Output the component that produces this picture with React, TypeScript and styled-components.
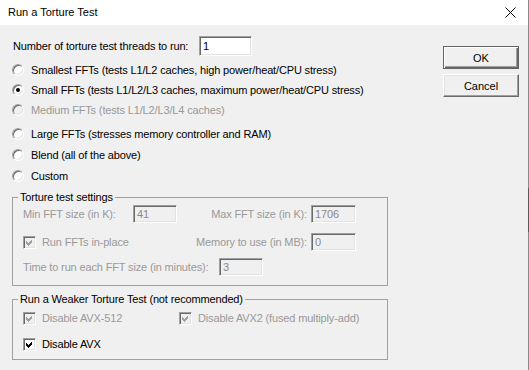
import styled, { createGlobalStyle, css } from 'styled-components';

const GlobalStyle = createGlobalStyle`
  html, body {
    margin: 0;
    padding: 0;
    background: #f0f0f0;
  }
  body {
    font-family: "Liberation Sans", Arial, sans-serif;
    font-size: 11px;
    letter-spacing: -0.15px;
    color: #000;
  }
  * {
    box-sizing: border-box;
  }
`;

const Window = styled.div`
  position: relative;
  width: 529px;
  height: 370px;
  background: #f0f0f0;
  display: flex;
  flex-direction: column;
  overflow: hidden;
  &::after {
    content: '';
    position: absolute;
    top: 0;
    right: 0;
    width: 1px;
    height: 100%;
    background: linear-gradient(
      to bottom,
      #8c8c8c 0 188px,
      #5a5a5a 188px 232px,
      #8c8c8c 232px
    );
  }
`;

const TitleBar = styled.div`
  height: 25px;
  flex: none;
  background: #fff;
  display: flex;
  align-items: center;
  justify-content: space-between;
  padding: 0 13px 0 8px;
`;

const Title = styled.span`
  font-size: 11px;
  line-height: 13px;
  letter-spacing: 0;
`;

const Body = styled.div`
  flex: 1;
  display: flex;
  padding: 11px 0 0 12px;
`;

const Main = styled.div`
  width: 376px;
  display: flex;
  flex-direction: column;
`;

const Side = styled.div`
  margin-left: 55px;
  padding-top: 10px;
  display: flex;
  flex-direction: column;
  gap: 5px;
`;

const Button = styled.button<{ $default?: boolean }>`
  width: 76px;
  height: 23px;
  padding: 0;
  font: inherit;
  letter-spacing: 0;
  color: #000;
  background: #f0f0f0;
  border: 1px solid;
  border-color: #fff #696969 #696969 #fff;
  box-shadow: inset -1px -1px 0 #a0a0a0, inset 1px 1px 0 #e3e3e3;
  ${(p) =>
    p.$default &&
    css`
      border-color: #646464;
      box-shadow: inset 1px 1px 0 #fff, inset -1px -1px 0 #696969,
        inset -2px -2px 0 #a0a0a0;
    `}
`;

const Row = styled.div<{ $h?: number; $mt?: number; $pl?: number }>`
  display: flex;
  align-items: center;
  height: ${(p) => p.$h ?? 20}px;
  margin-top: ${(p) => p.$mt ?? 0}px;
  padding-left: ${(p) => p.$pl ?? 0}px;
  white-space: nowrap;
`;

const Label = styled.span<{ $w?: number; $disabled?: boolean; $right?: boolean }>`
  ${(p) => p.$w && `width: ${p.$w}px; flex: none;`}
  color: ${(p) => (p.$disabled ? '#999' : '#000')};
  text-align: ${(p) => (p.$right ? 'right' : 'left')};
  padding-right: ${(p) => (p.$right ? 4 : 0)}px;
`;

const Field = styled.div<{ $w: number; $h?: number; $disabled?: boolean }>`
  width: ${(p) => p.$w}px;
  height: ${(p) => p.$h ?? 18}px;
  flex: none;
  display: flex;
  align-items: center;
  padding-left: 3px;
  border: 1px solid;
  border-color: #a0a0a0 #fff #fff #a0a0a0;
  box-shadow: inset 1px 1px 0 #696969, inset -1px -1px 0 #e3e3e3;
  background: ${(p) => (p.$disabled ? '#f0f0f0' : '#fff')};
  color: ${(p) => (p.$disabled ? '#8a8a8a' : '#000')};
`;

const RadioDot = styled.span<{ $checked?: boolean; $disabled?: boolean }>`
  position: relative;
  width: 12px;
  height: 12px;
  flex: none;
  margin-right: 7px;
  border-radius: 50%;
  border: 1px solid;
  border-color: #a0a0a0 #fff #fff #a0a0a0;
  box-shadow: inset 1px 1px 0 #696969, inset -1px -1px 0 #e3e3e3;
  background: ${(p) => (p.$disabled ? '#f0f0f0' : '#fff')};
  ${(p) =>
    p.$checked &&
    css`
      &::after {
        content: '';
        position: absolute;
        left: 3px;
        top: 3px;
        width: 4px;
        height: 4px;
        border-radius: 50%;
        background: #000;
      }
    `}
`;

const CheckBox = styled.span<{ $disabled?: boolean }>`
  width: 13px;
  height: 13px;
  flex: none;
  margin-right: 6px;
  display: flex;
  align-items: center;
  justify-content: center;
  border: 1px solid;
  border-color: #a0a0a0 #fff #fff #a0a0a0;
  box-shadow: inset 1px 1px 0 #696969, inset -1px -1px 0 #e3e3e3;
  background: ${(p) => (p.$disabled ? '#f0f0f0' : '#fff')};
`;

const CheckItem = styled.div<{ $w?: number }>`
  display: flex;
  align-items: center;
  ${(p) => p.$w && `width: ${p.$w}px; flex: none;`}
`;

const Group = styled.fieldset<{ $mt: number; $pb: number }>`
  margin: ${(p) => p.$mt}px 0 0;
  padding: 0 0 ${(p) => p.$pb}px;
  min-width: 0;
  border: 1px solid #a0a0a0;
`;

const Legend = styled.legend`
  margin-left: 5px;
  padding: 0 2px;
  line-height: 13px;
`;

const Tick = ({ color }: { color: string }) => (
  <svg width="7" height="7" viewBox="0 0 7 7" shapeRendering="crispEdges">
    <path d="M0 2 L2 4 L6 0 L6 3 L2 7 L0 5 Z" fill={color} />
  </svg>
);

const Check = ({
  label,
  checked,
  disabled,
  w,
}: {
  label: string;
  checked?: boolean;
  disabled?: boolean;
  w?: number;
}) => (
  <CheckItem $w={w}>
    <CheckBox $disabled={disabled}>
      {checked && <Tick color={disabled ? '#a0a0a0' : '#000'} />}
    </CheckBox>
    <Label $disabled={disabled}>{label}</Label>
  </CheckItem>
);

const radios = [
  { label: 'Smallest FFTs (tests L1/L2 caches, high power/heat/CPU stress)' },
  { label: 'Small FFTs (tests L1/L2/L3 caches, maximum power/heat/CPU stress)', checked: true },
  { label: 'Medium FFTs (tests L1/L2/L3/L4 caches)', disabled: true },
  { label: 'Large FFTs (stresses memory controller and RAM)', h: 21, mt: 3 },
  { label: 'Blend (all of the above)', h: 21 },
  { label: 'Custom', h: 21 },
];

const App = () => {
  return (
    <Window>
      <GlobalStyle />
      <TitleBar>
        <Title>Run a Torture Test</Title>
        <svg width="11" height="11" viewBox="0 0 11 11">
          <path d="M0.5 0.5 L10.5 10.5 M10.5 0.5 L0.5 10.5" stroke="#000" strokeWidth="1" />
        </svg>
      </TitleBar>
      <Body>
        <Main>
          <Row $pl={1}>
            <Label $w={186}>Number of torture test threads to run:</Label>
            <Field $w={53} $h={20}>1</Field>
          </Row>
          {radios.map((r, i) => (
            <Row key={r.label} $h={r.h ?? 20} $mt={i === 0 ? 4 : r.mt}>
              <RadioDot $checked={r.checked} $disabled={r.disabled} />
              <Label $disabled={r.disabled}>{r.label}</Label>
            </Row>
          ))}
          <Group $mt={5} $pb={9}>
            <Legend>Torture test settings</Legend>
            <Row $h={18} $mt={1} $pl={10}>
              <Label $w={110} $disabled>Min FFT size (in K):</Label>
              <Field $w={44} $disabled>41</Field>
              <Label $w={134} $right $disabled>Max FFT size (in K):</Label>
              <Field $w={45} $disabled>1706</Field>
            </Row>
            <Row $h={18} $mt={10} $pl={10}>
              <CheckItem $w={154}>
                <CheckBox $disabled>
                  <Tick color="#a0a0a0" />
                </CheckBox>
                <Label $disabled>Run FFTs in-place</Label>
              </CheckItem>
              <Label $w={134} $right $disabled>Memory to use (in MB):</Label>
              <Field $w={45} $disabled>0</Field>
            </Row>
            <Row $h={18} $mt={7} $pl={10}>
              <Label $w={196} $disabled>Time to run each FFT size (in minutes):</Label>
              <Field $w={44} $disabled>3</Field>
            </Row>
          </Group>
          <Group $mt={7} $pb={8}>
            <Legend>Run a Weaker Torture Test (not recommended)</Legend>
            <Row $h={14} $mt={5} $pl={10}>
              <Check w={156} label="Disable AVX-512" checked disabled />
              <Check label="Disable AVX2 (fused multiply-add)" checked disabled />
            </Row>
            <Row $h={14} $mt={12} $pl={10}>
              <Check label="Disable AVX" checked />
            </Row>
          </Group>
        </Main>
        <Side>
          <Button $default>OK</Button>
          <Button>Cancel</Button>
        </Side>
      </Body>
    </Window>
  );
};

export default App;
